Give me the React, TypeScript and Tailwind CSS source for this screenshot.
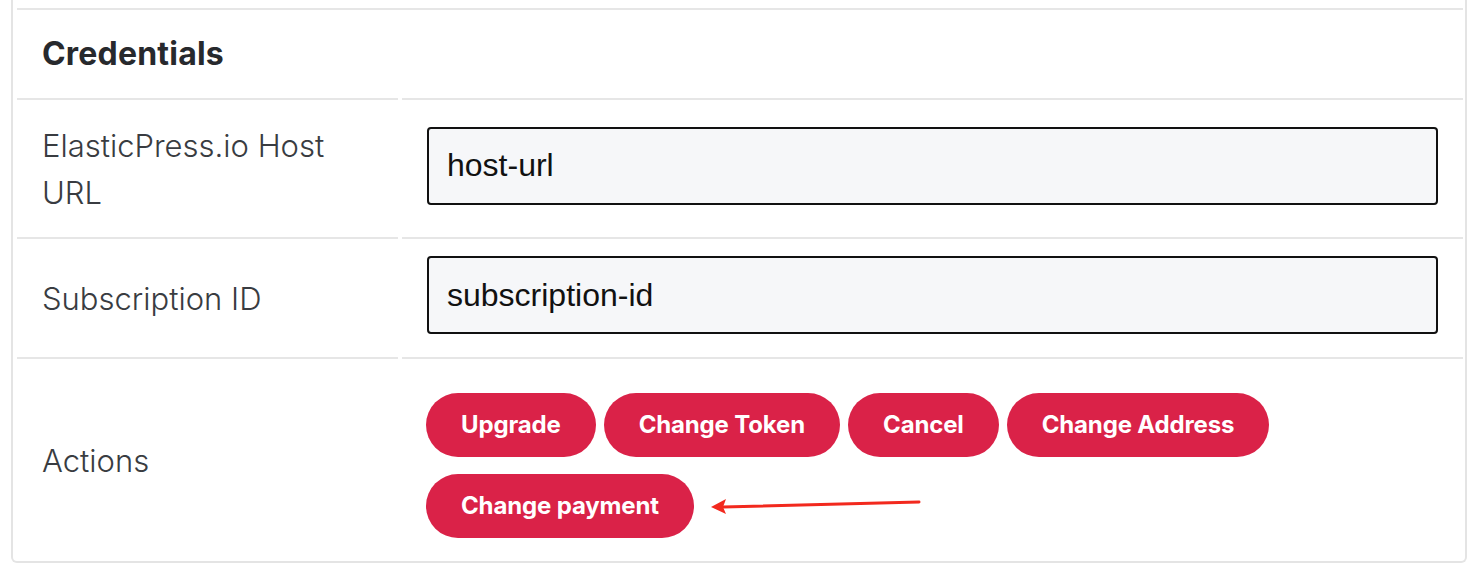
import React from "react";

// --- Types ---
type Field = {
  id: string;
  label: string;
  value: string;
  labelPad: string;
};

const fields: Field[] = [
  {
    id: "host",
    label: "ElasticPress.io Host URL",
    value: "host-url",
    labelPad: "py-[21.5px]",
  },
  {
    id: "subscription",
    label: "Subscription ID",
    value: "subscription-id",
    labelPad: "py-[21px]",
  },
];

const actions: string[] = [
  "Upgrade",
  "Change Token",
  "Cancel",
  "Change Address",
  "Change payment",
];

// --- Annotation arrow drawn over the screenshot ---
const PointerArrow: React.FC = () => (
  <svg
    className="absolute left-[705px] top-[498px] pointer-events-none"
    width="220"
    height="24"
    viewBox="0 0 220 24"
  >
    <line
      x1="18"
      y1="13"
      x2="214"
      y2="8"
      stroke="#f2291e"
      strokeWidth="3"
      strokeLinecap="round"
    />
    <polygon points="6,13 21,5 18,13 21,20" fill="#f2291e" />
  </svg>
);

// --- Table row for a text field ---
const FieldRow: React.FC<{ field: Field }> = ({ field }) => (
  <>
    <div
      className={`border-t-2 border-[#e6e6e6] px-[25px] ${field.labelPad} flex items-center`}
    >
      <span className="text-[31px] leading-[47px] font-light text-[#393c41]">
        {field.label}
      </span>
    </div>
    <div className="border-t-2 border-[#e6e6e6] px-[25px] py-[17px] flex items-center">
      <input
        type="text"
        readOnly
        value={field.value}
        className="w-full h-[78px] mb-[6px] rounded-[4px] border-2 border-[#111] bg-[#f6f7f9] pl-[18px] text-[32px] text-[#111] outline-none [font-family:'Liberation_Sans',Arial,sans-serif]"
      />
    </div>
  </>
);

export default function App() {
  return (
    <div className="relative min-h-screen bg-white font-['Inter',sans-serif] antialiased">
      <div className="mx-[11px] -mt-[4px] border-x-2 border-b-2 border-[#e4e4e4] rounded-b-[6px] pl-[4px] pr-[2px] pt-[12px]">
        <div className="grid grid-cols-[381px_1fr] gap-x-[4px]">
          {/* Section header */}
          <div className="col-span-2 border-t-2 border-[#e6e6e6] h-[90px] px-[25px] flex items-center">
            <h2 className="text-[32px] font-bold tracking-[0.2px] text-[#27292d]">
              Credentials
            </h2>
          </div>

          {fields.map((field) => (
            <FieldRow key={field.id} field={field} />
          ))}

          {/* Actions */}
          <div className="border-t-2 border-[#e6e6e6] px-[25px] flex items-center">
            <span className="text-[31px] leading-[47px] font-light text-[#393c41]">
              Actions
            </span>
          </div>
          <div className="border-t-2 border-[#e6e6e6] pl-[24px] pr-[25px] pt-[34px] pb-[23px]">
            <div className="flex flex-wrap gap-x-[8px] gap-y-[17px] max-w-[860px]">
              {actions.map((label) => (
                <button
                  key={label}
                  type="button"
                  className="h-[64px] px-[35px] rounded-full bg-[#da2248] text-white text-[24px] font-bold tracking-[-0.15px]"
                >
                  {label}
                </button>
              ))}
            </div>
          </div>
        </div>
      </div>

      <PointerArrow />
    </div>
  );
}
